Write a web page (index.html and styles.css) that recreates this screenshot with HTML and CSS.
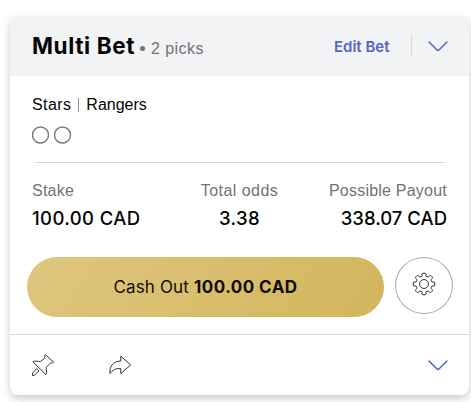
FILE: index.html
```html
<!DOCTYPE html>
<html lang="en">
<head>
    <meta charset="UTF-8">
    <title>Multi Bet</title>
    <link rel="stylesheet" href="styles.css">
</head>
<body>
<div class="bet-card">
    <div class="bet-header">
        <h2 class="bet-title">Multi Bet</h2>
        <span class="bet-dot"></span>
        <span class="bet-picks">2 picks</span>
        <a class="edit-link">Edit Bet</a>
        <span class="header-divider"></span>
        <svg class="chevron" width="20" height="11" viewBox="0 0 20 11"><path d="M1 1 L8.8 8.8 Q10 10 11.2 8.8 L19 1"/></svg>
    </div>

    <div class="bet-body">
        <div class="teams"><span class="team-first">Stars</span><span class="team-divider"></span><span class="team-second">Rangers</span></div>
        <div class="legs">
            <svg class="leg" width="18" height="18" viewBox="0 0 18 18"><circle cx="8.5" cy="9" r="8"/></svg>
            <svg class="leg" width="18" height="18" viewBox="0 0 18 18"><circle cx="8.5" cy="9" r="8"/></svg>
        </div>

        <div class="stats">
            <div class="stat">
                <span class="stat-label">Stake</span>
                <span class="stat-value">100.00 CAD</span>
            </div>
            <div class="stat center">
                <span class="stat-label label-odds">Total odds</span>
                <span class="stat-value">3.38</span>
            </div>
            <div class="stat right">
                <span class="stat-label">Possible Payout</span>
                <span class="stat-value value-payout">338.07 CAD</span>
            </div>
        </div>
    </div>

    <div class="bet-actions">
        <button class="cashout-btn"><span class="cashout-text">Cash Out</span><span class="cashout-amount">100.00 CAD</span></button>
        <button class="settings-btn">
            <svg width="24" height="24" viewBox="-12 -12 24 24">
                <path d="M-1.7 -10.7 H1.7 L2.2 -7.7 Q3.3 -7.4 4.1 -6.8 Q5.8 -8.4 6.8 -8.6 L8.6 -6.8 Q8.4 -5.8 6.8 -4.1 Q7.4 -3.3 7.7 -2.2 L10.7 -1.7 V1.7 L7.7 2.2 Q7.4 3.3 6.8 4.1 Q8.4 5.8 8.6 6.8 L6.8 8.6 Q5.8 8.4 4.1 6.8 Q3.3 7.4 2.2 7.7 L1.7 10.7 H-1.7 L-2.2 7.7 Q-3.3 7.4 -4.1 6.8 Q-5.8 8.4 -6.8 8.6 L-8.6 6.8 Q-8.4 5.8 -6.8 4.1 Q-7.4 3.3 -7.7 2.2 L-10.7 1.7 V-1.7 L-7.7 -2.2 Q-7.4 -3.3 -6.8 -4.1 Q-8.4 -5.8 -8.6 -6.8 L-6.8 -8.6 Q-5.8 -8.4 -4.1 -6.8 Q-3.3 -7.4 -2.2 -7.7 Z"/>
                <circle r="4.5"/>
            </svg>
        </button>
    </div>

    <div class="bet-footer">
        <svg class="pin-icon" width="24" height="24" viewBox="0 0 24 24">
            <path d="M14.4 1.5 L22.6 9.2 C21.3 10.4 20 9.7 19 10.4 L15.2 14.4 C14.8 16.8 16.7 19.4 14.8 21.5 L1.9 8.9 C3.8 7 7 9 9.6 8.4 L13.4 5.4 C14.3 4.2 13 2.8 14.4 1.5 Z"/>
            <path d="M5.7 15.6 L8 17.9 L3.6 22.2 L1.5 22.6 L1.6 20 Z"/>
        </svg>
        <svg class="share-icon" width="24" height="24" viewBox="0 0 24 24">
            <path d="M12.8 3.2 L22.6 12 L12.8 20.5 V15.6 C7.7 15.1 4.5 17 2 20.6 C1.4 13.6 4.6 8.4 12.8 8 Z"/>
        </svg>
        <svg class="chevron" width="20" height="11" viewBox="0 0 20 11"><path d="M1 1 L8.8 8.8 Q10 10 11.2 8.8 L19 1"/></svg>
    </div>
</div>
</body>
</html>
```

FILE: styles.css
```css
:root {
    --link: #5664c8;
    --muted: #707276;
    --line: #d8d9db;
}

body {
    margin: 0;
    padding: 16px 2px 0 10px;
    height: 402px;
    box-sizing: border-box;
    overflow: hidden;
    background: #fff;
    color: #050505;
    font-family: "Liberation Sans", Arial, sans-serif;
}
svg {
    display: block;
    flex: none;
    fill: none;
    stroke: #30313a;
    stroke-width: 1;
    stroke-linejoin: round;
}

/* card */
.bet-card {
    height: 379px;
    border-radius: 8px;
    background: #fff;
    box-shadow: 0 4px 10px rgba(0, 0, 0, 0.2);
    overflow: hidden;
}
.bet-header {
    display: flex;
    align-items: center;
    height: 60px;
    padding: 0 22px;
    background: #f2f3f5;
}
.bet-title {
    margin: 0;
    font: 700 22.5px/30px "Inter", sans-serif;
    letter-spacing: 0.6px;
    white-space: nowrap;
}
.bet-dot {
    width: 5px;
    height: 5px;
    margin: 5px 6px 0 5px;
    border-radius: 50%;
    background: var(--muted);
}
.bet-picks {
    padding-top: 5px;
    font-size: 16px;
    letter-spacing: 0.45px;
    color: var(--muted);
}
.edit-link {
    margin-left: auto;
    padding-top: 1px;
    font: 600 15px/20px "Inter", sans-serif;
    color: var(--link);
}
.header-divider {
    width: 1px;
    height: 22px;
    margin: 0 16px 0 21px;
    background: var(--line);
}
.chevron {
    stroke: var(--link);
    stroke-width: 1.5;
    stroke-linecap: round;
}
.bet-header .chevron {
    margin-right: -0.5px;
}

/* picks */
.bet-body {
    height: 181px;
    padding: 19px 22px 0;
    box-sizing: border-box;
}
.teams {
    display: flex;
    align-items: center;
    height: 20px;
    font-size: 16px;
}
.team-first {
    letter-spacing: 0.4px;
}
.team-divider {
    width: 1px;
    height: 14px;
    margin: 0 7px;
    background: #8f90ad;
}
.legs {
    display: flex;
    gap: 4px;
    height: 18px;
    margin-top: 11px;
}
.leg {
    stroke: #77797c;
    stroke-width: 1.4;
}
.stats {
    display: grid;
    grid-template-columns: 1fr auto 1fr;
    position: relative;
    margin-top: 18px;
    padding-top: 19px;
}
.stats::before {
    content: "";
    position: absolute;
    top: 0;
    left: 3px;
    right: 2px;
    height: 1px;
    background: var(--line);
}
.stat {
    display: flex;
    flex-direction: column;
    gap: 7px;
}
.stat.center {
    align-items: center;
}
.stat.right {
    align-items: flex-end;
}
.stat-label {
    font-size: 16px;
    line-height: 20px;
    letter-spacing: 0.22px;
    color: var(--muted);
}
.label-odds {
    letter-spacing: 0.45px;
}
.stat-value {
    font: 500 18.5px/20px "Inter", sans-serif;
    letter-spacing: 0.4px;
}
.value-payout {
    letter-spacing: 0;
}

/* buttons */
.bet-actions {
    display: flex;
    justify-content: space-between;
    height: 77px;
    padding: 0 16px 0 17px;
}
.cashout-btn {
    display: flex;
    align-items: center;
    justify-content: center;
    gap: 5px;
    width: 357px;
    height: 60px;
    padding: 0;
    border: none;
    border-radius: 30px;
    background: linear-gradient(120deg, #dfc67f, #d5ba64 75%, #d2b65e);
    color: #100d05;
    font: 400 17px/20px "Inter", sans-serif;
}
.cashout-text {
    letter-spacing: 0.15px;
}
.cashout-amount {
    font-weight: 700;
    letter-spacing: 0.45px;
}
.settings-btn {
    display: flex;
    align-items: center;
    justify-content: center;
    width: 58px;
    height: 57px;
    padding: 0 0 3px;
    border: 1px solid #aaa;
    border-radius: 50%;
    background: #fff;
}

.bet-footer {
    display: flex;
    align-items: center;
    height: 60px;
    padding: 0 21px;
    border-top: 1px solid var(--line);
}
.share-icon {
    margin-left: 53px;
}
.bet-footer .chevron {
    margin-left: auto;
}
```
